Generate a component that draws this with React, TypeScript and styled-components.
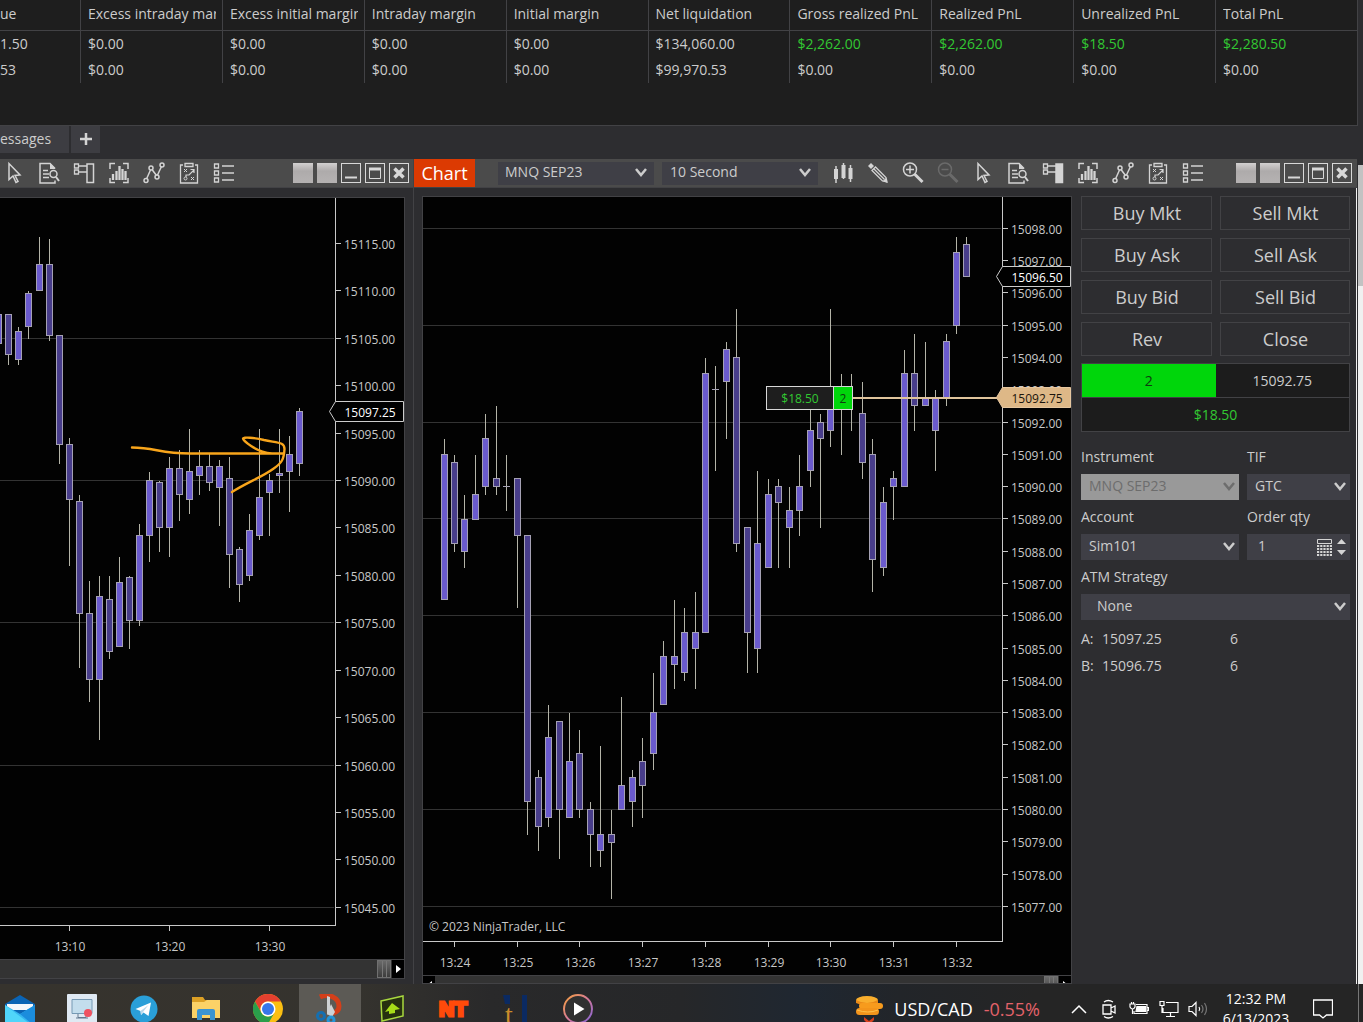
import React from 'react';
import styled, { createGlobalStyle } from 'styled-components';

const GlobalStyle = createGlobalStyle`
  * {
    box-sizing: border-box;
  }

  body {
    margin: 0;
    background: #2d2d30;
    color: #cccccc;
    font-family: 'Open Sans', 'Noto Sans', sans-serif;
    font-size: 14px;
    line-height: 20px;
  }

  button, input, select {
    font: inherit;
    color: inherit;
    margin: 0;
    padding: 0;
    border: 0;
    border-radius: 0;
    background: none;
  }
`;

const Screen = styled.div`
  display: flex;
  flex-direction: column;
  height: 100vh;
  overflow: hidden;
`;

/* ---------- accounts grid ---------- */

const AccountsPanel = styled.section`
  flex: none;
  height: 126px;
  margin-right: 5px;
  background: #1e1e1e;
  border-right: 1px solid #424245;
  border-bottom: 1px solid #424245;
`;

const AccountsTable = styled.table`
  width: 100%;
  table-layout: fixed;
  border-collapse: separate;
  border-spacing: 0;

  th, td {
    height: 26px;
    padding: 0 6px 0 7px;
    border-left: 1px solid #424245;
    font-weight: 400;
    text-align: left;
    white-space: nowrap;
    overflow: hidden;
  }

  th {
    height: 31px;
    padding-bottom: 2px;
    border-bottom: 1px solid #424245;
  }

  th:first-child, td:first-child {
    width: 80px;
    padding-left: 0;
    border-left: 0;
  }
`;

const Clip = styled.div`
  overflow: hidden;
`;

const Amount = styled.td<{ $gain?: boolean }>`
  color: ${(p) => (p.$gain ? '#32c832' : '#cccccc')};
`;

const TabStrip = styled.div`
  display: flex;
  flex: none;
  gap: 2px;
  height: 33px;
  padding-bottom: 6px;
`;

const Tab = styled.button<{ $width: number }>`
  display: flex;
  align-items: center;
  justify-content: ${(p) => (p.$width > 40 ? 'flex-start' : 'center')};
  width: ${(p) => p.$width}px;
  padding-bottom: 2px;
  background: #3d3d42;
`;

/* ---------- chart windows ---------- */

const Workspace = styled.main`
  display: flex;
  flex: 1;
  min-height: 0;
  overflow: hidden;
`;

const Pane = styled.section<{ $side?: boolean }>`
  display: flex;
  flex-direction: column;
  flex: ${(p) => (p.$side ? 'none' : '1')};
  width: ${(p) => (p.$side ? '414px' : 'auto')};
  min-width: 0;
  border-right: ${(p) => (p.$side ? '1px solid #424245' : '0')};
`;

const Toolbar = styled.header<{ $end: number }>`
  display: flex;
  flex: none;
  align-items: center;
  height: 29px;
  padding-right: ${(p) => p.$end}px;
  background: #4b4b4b;
  border-bottom: 1px solid #424245;
`;

const Tools = styled.div<{ $start: number }>`
  display: flex;
  margin-left: ${(p) => p.$start}px;
`;

const ToolButton = styled.button<{ $off?: boolean }>`
  display: flex;
  align-items: center;
  justify-content: center;
  width: 35px;
  height: 28px;
  color: ${(p) => (p.$off ? '#6a6a6a' : '#d4d4d4')};
`;

const WindowButtons = styled.div`
  display: flex;
  gap: 4px;
  margin-left: auto;
`;

const WindowButton = styled.button`
  display: flex;
  align-items: center;
  justify-content: center;
  width: 20px;
  height: 20px;
  border: 1px solid #d8d8d8;
`;

const LinkButton = styled.button`
  width: 20px;
  height: 20px;
  background: linear-gradient(#d2d0d0, #aeabab 40%, #b5b2b2);
`;

const ChartTag = styled.h1`
  margin: 0;
  width: 61px;
  height: 28px;
  background: #dc3a02;
  color: #ffffff;
  font-size: 18px;
  font-weight: 400;
  line-height: 28px;
  text-align: center;
`;

const Pickers = styled.div`
  display: flex;
  gap: 8px;
  width: 320px;
  margin-left: 23px;
`;

const SelectWrap = styled.div<{ $compact?: boolean; $off?: boolean }>`
  position: relative;
  flex: 1;
  height: ${(p) => (p.$compact ? 23 : 26)}px;
  background: ${(p) => (p.$off ? '#999999' : '#3f3f46')};
  color: ${(p) => (p.$off ? '#6d6d6d' : '#cccccc')};

  svg {
    position: absolute;
    top: ${(p) => (p.$compact ? 6 : 8)}px;
    right: ${(p) => (p.$compact ? 7 : 4)}px;
    pointer-events: none;
  }
`;

const NativeSelect = styled.select<{ $indent?: number }>`
  display: block;
  width: 100%;
  height: 100%;
  padding: 0 20px 2px ${(p) => p.$indent ?? 8}px;
  appearance: none;
  opacity: 1;
  outline: none;
`;

const SideBody = styled.div`
  padding: 9px 8px 0 0;
`;

const MainBody = styled.div`
  display: flex;
  flex: 1;
  min-height: 0;
  padding: 8px 0 0 8px;
  border-right: 1px solid #f2f2f2;
`;

const ChartFrame = styled.div<{ $flush?: boolean }>`
  flex: 1;
  min-width: 0;
  overflow: hidden;
  background: #020202;
  border: 1px solid #424245;
  border-left-width: ${(p) => (p.$flush ? 0 : 1)}px;

  > svg {
    display: block;
  }
`;

const ScrollBar = styled.div`
  display: flex;
  height: 19px;
  background: #333333;
  border-top: 1px solid #424245;
`;

const ScrollArrow = styled.button`
  display: flex;
  align-items: center;
  justify-content: center;
  width: 12px;
  height: 18px;
  background: #000000;
`;

const ScrollThumb = styled.div`
  width: 14px;
  height: 18px;
  margin: 0 1px 0 auto;
  background: linear-gradient(90deg, transparent 4px, #777 4px 5px, transparent 5px 8px, #777 8px 9px, transparent 9px),
    linear-gradient(#6a6a6a, #3c3c3c);
  border: 1px solid #707070;
`;

const PageRail = styled.div`
  flex: none;
  width: 5px;
  margin: 6px 0 0 1px;
  background: #f0f0f0;
`;

const PageThumb = styled.div`
  height: 121px;
  background: #c2c2c2;
`;

/* ---------- order entry ---------- */

const TradePanel = styled.aside`
  flex: none;
  width: 284px;
  padding: 0 6px 0 9px;
`;

const OrderGrid = styled.div`
  display: grid;
  grid-template-columns: 131fr 130fr;
  gap: 8px;
`;

const OrderButton = styled.button`
  height: 34px;
  padding-left: 1px;
  border: 1px solid #424245;
  font-size: 18px;
  line-height: 30px;
`;

const PositionBox = styled.div`
  display: grid;
  grid-template-columns: 1fr 1fr;
  margin-top: 7px;
  background: #1c1c1c;
  border: 1px solid #424245;
  line-height: 33px;
  text-align: center;
`;

const PositionQty = styled.div`
  background: #00d60b;
  color: #0f3a10;
`;

const PositionPnl = styled.div`
  grid-column: 1 / 3;
  border-top: 1px solid #424245;
  color: #32c832;
`;

const Form = styled.form`
  display: grid;
  grid-template-columns: 158fr 103fr;
  gap: 7px 8px;
  margin-top: 15px;
`;

const Field = styled.div<{ $wide?: boolean }>`
  display: flex;
  flex-direction: column;
  gap: 7px;
  grid-column: ${(p) => (p.$wide ? '1 / 3' : 'auto')};

  ${SelectWrap} {
    flex: none;
  }
`;

const QtyBox = styled.div`
  display: flex;
  align-items: center;
  gap: 5px;
  height: 26px;
  padding-right: 4px;
  background: #3f3f46;
`;

const QtyInput = styled.input`
  flex: 1;
  width: 20px;
  padding: 0 0 2px 11px;
  outline: none;
`;

const Spinner = styled.div`
  display: flex;
  flex-direction: column;
  gap: 6px;

  button {
    display: flex;
    height: 5px;
  }
`;

const Quotes = styled.dl`
  display: grid;
  grid-template-columns: 21px 128px 1fr;
  margin: 5px 0 0;
  line-height: 27px;

  dt, dd {
    margin: 0;
  }
`;

/* ---------- taskbar ---------- */

const Taskbar = styled.footer`
  flex: none;
  height: 38px;
  overflow: hidden;
  background: linear-gradient(90deg, #36332d 0, #35332e 26%, #29292a 36%, #262729 50%, #1f2731 59%, #222529 66%, #252525 76%);
`;

const TaskbarRow = styled.div`
  display: flex;
  align-items: center;
  height: 49px;
  color: #ffffff;
`;

const AppButtons = styled.nav`
  display: flex;
  margin-left: -11px;
`;

const AppButton = styled.button<{ $active?: boolean }>`
  display: flex;
  align-items: center;
  justify-content: center;
  width: 62px;
  height: 49px;
  background: ${(p) => (p.$active ? '#5c5a55' : 'none')};
`;

const Ticker = styled.button`
  display: flex;
  align-items: center;
  gap: 11px;
  margin: 0 24px 0 auto;
  font-size: 18px;

  svg {
    margin-right: -1px;
  }
`;

const Drop = styled.span`
  color: #e3626a;
`;

const TrayButton = styled.button<{ $width?: number }>`
  display: flex;
  align-items: center;
  justify-content: center;
  width: ${(p) => p.$width ?? 30}px;
`;

const Clock = styled.div`
  width: 84px;
  text-align: center;
`;

const ShowDesktop = styled.div`
  width: 5px;
  height: 49px;
  margin-left: 10px;
  border-left: 1px solid #777777;
`;

/* ---------- data ---------- */

// x, high, body top, body bottom, low, rising
type Candle = [number, number, number, number, number, boolean];

const minuteCandles: Candle[] = [
  [-2, 314, 314, 344, 344, true],
  [8, 314, 314, 355, 365, false],
  [18, 327, 331, 360, 365, true],
  [28, 291, 293, 327, 339, true],
  [39, 237, 264, 291, 291, true],
  [49, 239, 264, 336, 341, false],
  [59, 335, 335, 445, 464, false],
  [69, 438, 444, 500, 566, false],
  [79, 495, 501, 614, 668, false],
  [89, 581, 613, 680, 702, false],
  [99, 576, 596, 680, 740, true],
  [109, 576, 599, 652, 659, false],
  [119, 557, 582, 647, 647, true],
  [129, 576, 577, 621, 649, false],
  [139, 524, 535, 621, 626, true],
  [149, 472, 480, 536, 562, true],
  [159, 481, 482, 528, 552, false],
  [169, 457, 468, 528, 557, true],
  [179, 450, 468, 495, 521, false],
  [189, 429, 471, 500, 514, true],
  [199, 450, 466, 476, 495, true],
  [209, 454, 466, 483, 491, false],
  [219, 460, 466, 488, 526, true],
  [229, 457, 478, 555, 588, false],
  [239, 547, 549, 585, 602, false],
  [249, 514, 530, 576, 581, true],
  [259, 429, 497, 536, 540, true],
  [269, 474, 480, 493, 536, true],
  [279, 429, 473, 476, 493, true],
  [289, 436, 454, 472, 512, true],
  [299, 408, 411, 464, 476, true],
];

const secondCandles: Candle[] = [
  [444, 439, 454, 600, 600, true],
  [454, 455, 462, 544, 552, false],
  [464, 495, 519, 552, 568, true],
  [475, 455, 494, 520, 520, true],
  [485, 414, 438, 487, 495, true],
  [496, 406, 478, 487, 495, false],
  [506, 455, 486, 487, 511, true],
  [517, 478, 478, 536, 608, false],
  [527, 535, 535, 802, 835, false],
  [538, 770, 777, 827, 851, false],
  [548, 705, 737, 818, 827, true],
  [559, 721, 721, 810, 859, false],
  [569, 713, 761, 818, 818, true],
  [579, 730, 753, 810, 818, false],
  [590, 802, 809, 835, 867, false],
  [600, 746, 834, 851, 867, true],
  [611, 810, 834, 843, 899, false],
  [621, 697, 785, 810, 810, true],
  [632, 770, 777, 802, 827, true],
  [642, 738, 761, 786, 818, false],
  [653, 673, 712, 754, 770, true],
  [663, 641, 656, 705, 705, true],
  [674, 600, 656, 665, 689, true],
  [684, 608, 632, 673, 681, true],
  [695, 592, 632, 649, 689, true],
  [705, 358, 373, 633, 633, true],
  [715, 366, 389, 390, 471, true],
  [726, 342, 349, 382, 439, true],
  [736, 309, 357, 544, 552, false],
  [747, 527, 527, 633, 673, false],
  [757, 471, 543, 649, 673, true],
  [768, 479, 494, 568, 568, true],
  [778, 479, 486, 503, 568, false],
  [789, 487, 510, 528, 568, true],
  [799, 455, 486, 511, 536, true],
  [810, 400, 430, 471, 487, true],
  [820, 414, 422, 439, 528, false],
  [830, 309, 405, 431, 447, true],
  [841, 374, 397, 398, 455, true],
  [851, 374, 397, 398, 431, true],
  [862, 382, 413, 463, 479, false],
  [872, 439, 454, 560, 592, false],
  [883, 487, 502, 568, 576, true],
  [893, 471, 478, 487, 520, true],
  [904, 350, 373, 487, 487, true],
  [914, 334, 373, 406, 431, false],
  [925, 342, 398, 406, 406, true],
  [935, 390, 398, 431, 471, true],
  [946, 334, 341, 398, 406, true],
  [956, 237, 252, 326, 334, true],
  [966, 237, 244, 277, 277, false],
];

const columns = [
  'Excess intraday margin',
  'Excess initial margin',
  'Intraday margin',
  'Initial margin',
  'Net liquidation',
  'Gross realized PnL',
  'Realized PnL',
  'Unrealized PnL',
  'Total PnL',
];

const accounts = [
  {
    cash: '1.50',
    values: ['$0.00', '$0.00', '$0.00', '$0.00', '$134,060.00', '$2,262.00', '$2,262.00', '$18.50', '$2,280.50'],
    gainFrom: 5,
  },
  {
    cash: '53',
    values: ['$0.00', '$0.00', '$0.00', '$0.00', '$99,970.53', '$0.00', '$0.00', '$0.00', '$0.00'],
    gainFrom: 9,
  },
];

const orderButtons = ['Buy Mkt', 'Sell Mkt', 'Buy Ask', 'Sell Ask', 'Buy Bid', 'Sell Bid', 'Rev', 'Close'];

/* ---------- icons ---------- */

type IconProps = { children: React.ReactNode; size?: number };

const Icon: React.FC<IconProps> = ({ children, size = 24 }) => (
  <svg width={size} height={size} viewBox="0 0 24 24" fill="none" stroke="currentColor" strokeWidth="1.5" aria-hidden="true">
    {children}
  </svg>
);

const CandlesIcon = () => (
  <Icon>
    <path d="M5 5v17M12.500 2v16M19.500 4v17" />
    <path d="M3 8h4v10H3zM10.500 4h4v13h-4zM17.500 7h4v11h-4z" fill="currentColor" stroke="none" />
  </Icon>
);

const PencilIcon = () => (
  <Icon>
    <path d="M2 5l3-3 3 3-3 3z" fill="currentColor" stroke="none" />
    <path d="M6 9.500L9.500 6 20 16.500l1 4.500-4.500-1z" strokeWidth="1.300" />
    <path d="M8 8l10.500 10.500" strokeWidth="1.300" />
    <path d="M17 20l3-3 1.500 5z" fill="currentColor" stroke="none" />
  </Icon>
);

const ZoomIcon: React.FC<{ out?: boolean }> = ({ out }) => (
  <Icon>
    <circle cx="9" cy="8.500" r="6.500" />
    <path d={out ? 'M5.500 8.500h7' : 'M5 8.500h8M9 4.500v8'} />
    <path d="M13.500 13l8 8" strokeWidth="3" />
  </Icon>
);

const CursorIcon = () => (
  <Icon>
    <path d="M7 2.500v16l4-3.500 3 6.500 2-1-3-6 5-.5z" />
  </Icon>
);

const DataBoxIcon = () => (
  <Icon>
    <path d="M18 19.500v2.500H3V2.500h10l5 5" />
    <path d="M13 2v6h5.500z" fill="currentColor" stroke="none" />
    <path d="M6 9.500h5M6 13h6M6 16.500h6" />
    <circle cx="16.500" cy="13" r="3.500" />
    <path d="M19 16l3 4" strokeWidth="2" />
  </Icon>
);

const TraderIcon: React.FC<{ solid?: boolean }> = ({ solid }) => (
  <Icon>
    <path d="M2.500 3h4v4h-4zM2.500 9h4v4h-4z" strokeWidth="1.300" />
    <path d="M7 5h8M7 11h8" />
    <path d="M15 3h6.500v18.500H15z" fill={solid ? 'currentColor' : 'none'} />
  </Icon>
);

const IndicatorIcon = () => (
  <Icon>
    <path d="M8 2.500H3V8M16 2.500h5V8M8 21.500H3V17M16 21.500h5V17" />
    <path d="M6 13v6M9.500 10v9M12.500 5v14M15.500 8v11M18.500 10v9" strokeWidth="2.300" />
  </Icon>
);

const LinesIcon = () => (
  <Icon>
    <path d="M4.500 18l4-9M10 8.500l4.500 6M15.500 14l4-8.500" />
    <circle cx="4" cy="19.500" r="2" />
    <circle cx="9" cy="7" r="2" />
    <circle cx="15" cy="16" r="2" />
    <circle cx="20" cy="4" r="2" />
  </Icon>
);

const StrategyIcon = () => (
  <Icon>
    <path d="M6 4H3.500v18h17V4H18M8 2.500h8v3H8z" strokeWidth="1.300" />
    <path d="M7 8l3 3M10 8l-3 3M14 16l3 3M17 16l-3 3" strokeWidth="1" />
    <circle cx="8.500" cy="17.500" r="1.500" strokeWidth="1" />
    <path d="M9 16v-2h3l5-5M13.500 8.500H17V12" strokeWidth="1.200" />
  </Icon>
);

const ListIcon = () => (
  <Icon>
    <path d="M2.500 3h4v4h-4zM2.500 10h4v4h-4zM2.500 17h4v4h-4z" strokeWidth="1.300" />
    <path d="M10 5h12M10 12h12M10 19h12" />
  </Icon>
);

const Chevron = () => (
  <svg width="12" height="9" viewBox="0 0 12 9" fill="none" stroke="currentColor" strokeWidth="2.500" aria-hidden="true">
    <path d="M1 1l5 6 5-6" />
  </svg>
);

const ChartTools: React.FC<{ solid?: boolean }> = ({ solid }) => (
  <>
    <ToolButton aria-label="Cursor"><CursorIcon /></ToolButton>
    <ToolButton aria-label="Data box"><DataBoxIcon /></ToolButton>
    <ToolButton aria-label="Chart trader"><TraderIcon solid={solid} /></ToolButton>
    <ToolButton aria-label="Data series"><IndicatorIcon /></ToolButton>
    <ToolButton aria-label="Indicators"><LinesIcon /></ToolButton>
    <ToolButton aria-label="Strategies"><StrategyIcon /></ToolButton>
    <ToolButton aria-label="Properties"><ListIcon /></ToolButton>
  </>
);

const WindowControls = () => (
  <WindowButtons>
    <LinkButton aria-label="Link instrument" />
    <LinkButton aria-label="Link interval" />
    <WindowButton aria-label="Minimize">
      <svg width="18" height="18"><path d="M3 13.500h12" stroke="#d8d8d8" strokeWidth="2" /></svg>
    </WindowButton>
    <WindowButton aria-label="Maximize">
      <svg width="18" height="18" fill="none" stroke="#d8d8d8">
        <path d="M3.500 4.500h11v10h-11z" />
        <path d="M3 5h12" strokeWidth="3" />
      </svg>
    </WindowButton>
    <WindowButton aria-label="Close window">
      <svg width="18" height="18"><path d="M4.500 4.500l9 9M13.500 4.500l-9 9" stroke="#d8d8d8" strokeWidth="3.500" /></svg>
    </WindowButton>
  </WindowButtons>
);

/* ---------- charts ---------- */

const Candles: React.FC<{ data: Candle[] }> = ({ data }) => (
  <g shapeRendering="crispEdges">
    {data.map(([x, high, top, bottom, low, rising]) => (
      <g key={x}>
        <rect x={x} y={high} width={1} height={low - high} fill="#b4b4a8" />
        <rect x={x - 3} y={top} width={7} height={bottom - top} fill="#a5a1b4" />
        {bottom - top > 2 && (
          <rect x={x - 2} y={top + 1} width={5} height={bottom - top - 2} fill={rising ? '#6a5acd' : '#483d8b'} />
        )}
      </g>
    ))}
  </g>
);

type AxesProps = {
  left: number;
  right: number;
  top: number;
  bottom: number;
  first: number;
  step: number;
  count: number;
  start: number;
  by: number;
  gridOffset: number;
  times: [number, string][];
};

const Axes: React.FC<AxesProps> = ({ left, right, top, bottom, first, step, count, start, by, gridOffset, times }) => {
  const levels = Array.from({ length: count }, (_, i) => ({
    y: Math.floor(first + step * i),
    label: (start - by * i).toFixed(2),
    grid: i % 3 === gridOffset,
  }));

  return (
    <g fontSize="12" fill="#c8c8c8">
      {levels.map(({ y, label, grid }) => (
        <g key={label}>
          {grid && <rect x={left} y={y} width={right - left - 1} height={1} fill="#333333" />}
          <rect x={right} y={y} width={6} height={1} />
          <text x={right + 9} y={y + 6}>{label}</text>
        </g>
      ))}
      {times.map(([x, label]) => (
        <g key={label}>
          <rect x={x} y={bottom} width={1} height={6} />
          <text x={x + 1} y={bottom + 26} textAnchor="middle">{label}</text>
        </g>
      ))}
      <rect x={right} y={top} width={1} height={bottom - top + 1} />
      <rect x={left} y={bottom} width={right - left} height={1} />
    </g>
  );
};

const PriceTag: React.FC<{ x: number; y: number; label: string; entry?: boolean }> = ({ x, y, label, entry }) => (
  <g>
    <path
      d={`M${x - 6} ${y}l6-10h68v20h-68z`}
      fill={entry ? '#deb887' : '#000000'}
      stroke={entry ? '#e6c7a0' : '#cccccc'}
    />
    <text x={x + 9} y={y + 5} fontSize="12" fill={entry ? '#1a140c' : '#ffffff'}>{label}</text>
  </g>
);

const MinuteChart = () => (
  <svg width="404" height="761" viewBox="0 198 404 761">
    <Axes
      left={0} right={335} top={198} bottom={925}
      first={243.4} step={47.43} count={15} start={15115} by={5} gridOffset={2}
      times={[[69, '13:10'], [169, '13:20'], [269, '13:30']]}
    />
    <Candles data={minuteCandles} />
    <PriceTag x={335.5} y={411.5} label="15097.25" />
    <path
      d="M132 447.500C155 447.500 160 453.500 190 453.500H284M232 492C248 482 262 477 273 469C282 463 284 459 284.500 449C284.500 442 278 443 264 440C254 437.500 243 437 243 438.500C243 440 255 452 272 453.500"
      fill="none" stroke="#f8a51b" strokeWidth="2.400" strokeLinecap="round" strokeLinejoin="round"
    />
  </svg>
);

const SecondChart = () => (
  <svg width="648" height="778" viewBox="423 197 648 778">
    <Axes
      left={423} right={1002} top={197} bottom={941}
      first={228.4} step={32.28} count={22} start={15098} by={1} gridOffset={0}
      times={[
        [454, '13:24'], [517, '13:25'], [579, '13:26'], [642, '13:27'], [705, '13:28'],
        [768, '13:29'], [830, '13:30'], [893, '13:31'], [956, '13:32'],
      ]}
    />
    <Candles data={secondCandles} />
    <rect x="853" y="397" width="144" height="2" fill="#e0c49c" />
    <PriceTag x={1002.5} y={276.5} label="15096.50" />
    <PriceTag x={1002.5} y={397.5} label="15092.75" entry />
    <rect x="766.5" y="386.5" width="86" height="23" fill="#1e1e1e" stroke="#d8d8d8" />
    <path d="M833.500 386v24" stroke="#d8d8d8" />
    <rect x="834" y="387" width="18" height="22" fill="#00d60b" />
    <text x="800" y="403" fontSize="12" textAnchor="middle" fill="#32c832">$18.50</text>
    <text x="843" y="403" fontSize="12" textAnchor="middle" fill="#0f3a10">2</text>
    <text x="429" y="931" fontSize="12" fill="#c8c8c8">© 2023 NinjaTrader, LLC</text>
  </svg>
);

/* ---------- taskbar artwork ---------- */

const MailArt = () => (
  <svg width="30" height="30" viewBox="0 0 30 30">
    <path d="M0 10L15 1l15 9v3L15 22 0 13z" fill="#0b64b4" />
    <path d="M2 10h26v6H2z" fill="#f5f7fa" />
    <path d="M0 11l15 9 15-9v19H0z" fill="#35b6f0" />
    <path d="M0 11l25 19H0z" fill="#50d5fa" />
    <path d="M30 11L15 20l12 10h3z" fill="#1b8ddd" />
  </svg>
);

const RecorderArt = () => (
  <svg width="30" height="30" viewBox="0 0 30 30">
    <rect width="30" height="30" rx="1" fill="#dfe9f3" />
    <path d="M5 5.500h20v14H5z" fill="#c3dded" stroke="#7699b4" />
    <path d="M11 20v3.500h8V20M9 24h12" stroke="#647b91" fill="none" />
    <circle cx="21" cy="19" r="4" fill="#ef5261" />
  </svg>
);

const TelegramArt = () => (
  <svg width="28" height="28" viewBox="0 0 28 28">
    <circle cx="14" cy="14" r="13.500" fill="#2a9fd8" />
    <path d="M5.500 14L21 7.500 18.500 21l-5-3.500-2.500 2.500-.5-4z" fill="#ffffff" />
    <path d="M10.500 16l8-6-5.500 7-2 3z" fill="#b9d8ea" />
  </svg>
);

const FolderArt = () => (
  <svg width="28" height="28" viewBox="0 0 28 28">
    <path d="M0 2h11l2 3h15v5H0z" fill="#dca025" />
    <path d="M0 7h12l3-2h13v18H0z" fill="#fbd267" />
    <path d="M5 25V16q0-2 2-2h14q2 0 2 2v9h-5v-5h-8v5z" fill="#3b94d1" />
  </svg>
);

const ChromeArt = () => (
  <svg width="30" height="30" viewBox="0 0 30 30">
    <circle cx="15" cy="15" r="15" fill="#fbbf12" />
    <path d="M2 7.500A15 15 0 0 1 28 7.500H15A7.500 7.500 0 0 0 8.500 19z" fill="#e4402f" />
    <path d="M2 7.500L8.500 19A7.500 7.500 0 0 0 21 19.500L15 30A15 15 0 0 1 2 7.500z" fill="#2a9e4b" />
    <circle cx="15" cy="15" r="7.500" fill="#ffffff" />
    <circle cx="15" cy="15" r="6" fill="#3777ea" />
  </svg>
);

const SnipArt = () => (
  <svg width="30" height="30" viewBox="0 0 30 30">
    <path d="M5 3C14-1 24 4 24 12q0 6-6 7" fill="none" stroke="#d33f1a" strokeWidth="5" />
    <path d="M12 2l3 1v14l-3 4zM16 10l4 8-3 5-5-3z" fill="#cfd2d4" />
    <circle cx="6" cy="22" r="3.500" fill="none" stroke="#156fb0" strokeWidth="3" />
    <circle cx="16" cy="26" r="3" fill="none" stroke="#2295d9" strokeWidth="3" />
  </svg>
);

const UploadArt = () => (
  <svg width="28" height="28" viewBox="0 0 28 28">
    <path d="M3 6L25 1v20L4 26z" fill="#26300f" stroke="#a8d83e" strokeWidth="1.500" />
    <path d="M14 8l8 6-5 1v3l-6 1v-3l-4 1z" fill="#a6dc18" />
  </svg>
);

const NinjaArt = () => (
  <svg width="34" height="28" viewBox="0 0 34 28">
    <text
      x="16" y="21" textAnchor="middle" fontFamily="Liberation Sans, sans-serif" fontSize="21" fontWeight="700"
      fill="#ff4a0a" stroke="#ff4a0a" strokeWidth="3"
    >
      NT
    </text>
  </svg>
);

const BrokerArt = () => (
  <svg width="30" height="30" viewBox="0 0 30 30">
    <path d="M2 1h7v9H4zM21 1h5v28h-5z" fill="#0b2a62" />
    <text x="8" y="30" textAnchor="middle" fontFamily="Liberation Serif, serif" fontSize="28" fill="#c98c2a">t</text>
  </svg>
);

const PlayArt = () => (
  <svg width="32" height="32" viewBox="0 0 32 32">
    <defs>
      <linearGradient id="ring" x1="0" y1="0" x2="1" y2="1">
        <stop offset="0" stopColor="#f7a13c" />
        <stop offset="0.5" stopColor="#d4799a" />
        <stop offset="1" stopColor="#8163d8" />
      </linearGradient>
    </defs>
    <circle cx="16" cy="16" r="14" fill="#303030" stroke="url(#ring)" strokeWidth="2" />
    <path d="M12 9.500l10.500 6.500L12 22.500z" fill="#ffffff" />
  </svg>
);

const CoinsArt = () => (
  <svg width="30" height="30" viewBox="0 0 30 30">
    <ellipse cx="13" cy="6" rx="11" ry="4" fill="#f9ae2d" />
    <path d="M2 6v3q11 5 22 0V6q-11 6-22 0" fill="#e98917" />
    <rect x="5" y="9" width="24" height="6" rx="3" fill="#f79b1d" />
    <rect x="2" y="14" width="23" height="7" rx="3.500" fill="#f3941b" />
    <path d="M3 16q11 4 21 0" stroke="#ffc14b" fill="none" />
    <path d="M10 23l5 4 5-4v3l-5 5-5-5z" fill="#d8401d" />
  </svg>
);

const apps: [string, React.FC][] = [
  ['Mail', MailArt],
  ['Steps Recorder', RecorderArt],
  ['Telegram', TelegramArt],
  ['File Explorer', FolderArt],
  ['Chrome', ChromeArt],
  ['Snipping Tool', SnipArt],
  ['Upload', UploadArt],
  ['NinjaTrader', NinjaArt],
  ['Broker', BrokerArt],
  ['Media Player', PlayArt],
];

/* ---------- page ---------- */

const OrderEntry = () => (
  <TradePanel>
    <OrderGrid>
      {orderButtons.map((label) => (
        <OrderButton key={label}>{label}</OrderButton>
      ))}
    </OrderGrid>
    <PositionBox>
      <PositionQty>2</PositionQty>
      <div>15092.75</div>
      <PositionPnl>$18.50</PositionPnl>
    </PositionBox>
    <Form>
      <Field>
        <label htmlFor="instrument">Instrument</label>
        <SelectWrap $off>
          <NativeSelect id="instrument" disabled><option>MNQ SEP23</option></NativeSelect>
          <Chevron />
        </SelectWrap>
      </Field>
      <Field>
        <label htmlFor="tif">TIF</label>
        <SelectWrap>
          <NativeSelect id="tif"><option>GTC</option></NativeSelect>
          <Chevron />
        </SelectWrap>
      </Field>
      <Field>
        <label htmlFor="account">Account</label>
        <SelectWrap>
          <NativeSelect id="account"><option>Sim101</option></NativeSelect>
          <Chevron />
        </SelectWrap>
      </Field>
      <Field>
        <label htmlFor="qty">Order qty</label>
        <QtyBox>
          <QtyInput id="qty" defaultValue="1" />
          <svg width="15" height="17" viewBox="0 0 15 17" aria-hidden="true">
            <path d="M.5.5h14v4H.5z" fill="none" stroke="#d4d4d4" />
            <path d="M0 7h15M0 10h15M0 13h15M0 16h15" stroke="#d4d4d4" strokeWidth="2" strokeDasharray="2.200 1" />
          </svg>
          <Spinner>
            <button type="button" aria-label="Increase quantity">
              <svg width="9" height="5"><path d="M0 5L4.500 0 9 5z" fill="#d4d4d4" /></svg>
            </button>
            <button type="button" aria-label="Decrease quantity">
              <svg width="9" height="5"><path d="M0 0L4.500 5 9 0z" fill="#d4d4d4" /></svg>
            </button>
          </Spinner>
        </QtyBox>
      </Field>
      <Field $wide>
        <label htmlFor="atm">ATM Strategy</label>
        <SelectWrap>
          <NativeSelect id="atm" $indent={16}><option>None</option></NativeSelect>
          <Chevron />
        </SelectWrap>
      </Field>
    </Form>
    <Quotes>
      <dt>A:</dt>
      <dd>15097.25</dd>
      <dd>6</dd>
      <dt>B:</dt>
      <dd>15096.75</dd>
      <dd>6</dd>
    </Quotes>
  </TradePanel>
);

const App: React.FC = () => {
  return (
    <Screen>
      <GlobalStyle />
      <AccountsPanel>
        <AccountsTable>
          <thead>
            <tr>
              <th>ue</th>
              {columns.map((name) => (
                <th key={name}><Clip>{name}</Clip></th>
              ))}
            </tr>
          </thead>
          <tbody>
            {accounts.map((account) => (
              <tr key={account.cash}>
                <td>{account.cash}</td>
                {account.values.map((value, i) => (
                  <Amount key={columns[i]} $gain={i >= account.gainFrom}>{value}</Amount>
                ))}
              </tr>
            ))}
          </tbody>
        </AccountsTable>
      </AccountsPanel>
      <TabStrip>
        <Tab $width={69}>essages</Tab>
        <Tab $width={29} aria-label="Add tab">
          <svg width="14" height="14"><path d="M7 1v12M1 7h12" stroke="#d4d4d4" strokeWidth="2.500" /></svg>
        </Tab>
      </TabStrip>

      <Workspace>
        <Pane $side>
          <Toolbar $end={4}>
            <Tools $start={-4}><ChartTools /></Tools>
            <WindowControls />
          </Toolbar>
          <SideBody>
            <ChartFrame $flush>
              <MinuteChart />
              <ScrollBar>
                <ScrollThumb />
                <ScrollArrow aria-label="Scroll right">
                  <svg width="5" height="8"><path d="M0 0l5 4-5 4z" fill="#ffffff" /></svg>
                </ScrollArrow>
              </ScrollBar>
            </ChartFrame>
          </SideBody>
        </Pane>

        <Pane>
          <Toolbar $end={5}>
            <ChartTag>Chart</ChartTag>
            <Pickers>
              <SelectWrap $compact>
                <NativeSelect aria-label="Instrument" $indent={7}><option>MNQ SEP23</option></NativeSelect>
                <Chevron />
              </SelectWrap>
              <SelectWrap $compact>
                <NativeSelect aria-label="Interval"><option>10 Second</option></NativeSelect>
                <Chevron />
              </SelectWrap>
            </Pickers>
            <Tools $start={7}>
              <ToolButton aria-label="Bar style"><CandlesIcon /></ToolButton>
              <ToolButton aria-label="Draw"><PencilIcon /></ToolButton>
              <ToolButton aria-label="Zoom in"><ZoomIcon /></ToolButton>
              <ToolButton aria-label="Zoom out" $off><ZoomIcon out /></ToolButton>
              <ChartTools solid />
            </Tools>
            <WindowControls />
          </Toolbar>
          <MainBody>
            <ChartFrame>
              <SecondChart />
              <ScrollBar>
                <ScrollArrow aria-label="Scroll left">
                  <svg width="5" height="8"><path d="M5 0L0 4l5 4z" fill="#ffffff" /></svg>
                </ScrollArrow>
                <ScrollThumb />
                <ScrollArrow aria-label="Scroll right">
                  <svg width="5" height="8"><path d="M0 0l5 4-5 4z" fill="#ffffff" /></svg>
                </ScrollArrow>
              </ScrollBar>
            </ChartFrame>
            <OrderEntry />
          </MainBody>
        </Pane>
        <PageRail><PageThumb /></PageRail>
      </Workspace>

      <Taskbar>
        <TaskbarRow>
          <AppButtons>
            {apps.map(([name, Art]) => (
              <AppButton key={name} aria-label={name} $active={name === 'Snipping Tool'}><Art /></AppButton>
            ))}
          </AppButtons>
          <Ticker>
            <CoinsArt />
            <span>USD/CAD</span>
            <Drop>-0.55%</Drop>
          </Ticker>
          <TrayButton aria-label="Show hidden icons">
            <svg width="16" height="10" fill="none" stroke="#ffffff" strokeWidth="1.500"><path d="M1 9l7-7 7 7" /></svg>
          </TrayButton>
          <TrayButton aria-label="Meet now">
            <svg width="16" height="20" fill="none" stroke="#ffffff" strokeWidth="1.300">
              <path d="M2 6h8v9H2zM10 9l4-2v7l-4-2M3 3q4-3 9 0M3 17.500q4 3 9 0" />
            </svg>
          </TrayButton>
          <TrayButton aria-label="Battery">
            <svg width="20" height="16" fill="none" stroke="#ffffff" strokeWidth="1.200">
              <path d="M7 3.500h11v9H5V10M18 6.500h1.500v3H18" />
              <path d="M8 5.500h8.500v5H7z" fill="#ffffff" />
              <path d="M1 3h5v3q-1 2-2.500 2T1 6zM2.500 1v2M4.500 1v2M3.500 8v5" />
            </svg>
          </TrayButton>
          <TrayButton aria-label="Network">
            <svg width="20" height="18" fill="none" stroke="#ffffff" strokeWidth="1.200">
              <path d="M7 2.500h12v10H4V8M11.500 13v3M7 16.500h9M1 1.500h4v4H1zM3 6v7" />
            </svg>
          </TrayButton>
          <TrayButton aria-label="Volume">
            <svg width="22" height="18" fill="none" stroke="#ffffff" strokeWidth="1.200">
              <path d="M1 6.500h3l4-4v13l-4-4H1zM11 7q1.500 2 0 4" />
              <path d="M13.500 5q3 4 0 8M16.500 3q4 6 0 12" stroke="#777777" />
            </svg>
          </TrayButton>
          <Clock>
            <div>12:32 PM</div>
            <div>6/13/2023</div>
          </Clock>
          <TrayButton $width={50} aria-label="Notifications">
            <svg width="20" height="20" fill="none" stroke="#ffffff" strokeWidth="1.300">
              <path d="M.5 1h19v15h-6l-3.500 3-3.500-3h-6z" />
            </svg>
          </TrayButton>
          <ShowDesktop />
        </TaskbarRow>
      </Taskbar>
    </Screen>
  );
};

export default App;
